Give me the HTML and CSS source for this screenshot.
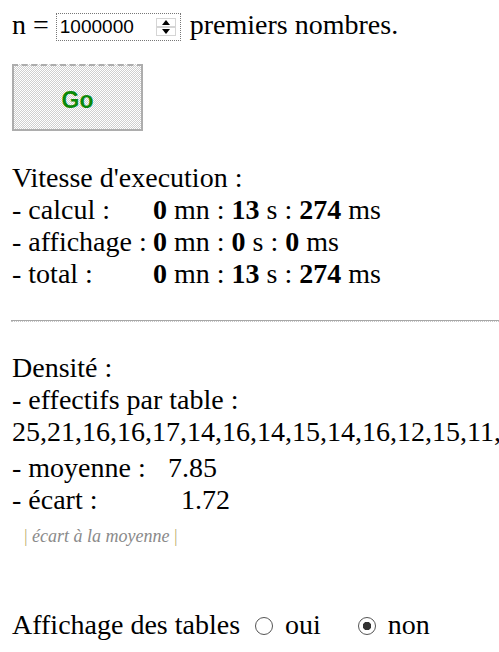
FILE: index.html
```html
<!DOCTYPE html>
<html>
<head>
    <title>Nombres premiers</title>
    <link rel="stylesheet" href="styles.css">
</head>
<body>
    <div class="ligne">
        n =
        <span class="numbox">
            <input type="text" id="n" value="1000000">
            <span class="spin">
                <svg width="20" height="18" viewBox="0 0 20 18">
                    <rect x="0.5" y="0.5" width="19" height="8" fill="none" stroke="#aaa" stroke-dasharray="1 1"/>
                    <rect x="0.5" y="9.5" width="19" height="8" fill="none" stroke="#aaa" stroke-dasharray="1 1"/>
                    <path d="M10 2 L14 7 L6 7 Z" fill="#000"/>
                    <path d="M10 16 L14 11 L6 11 Z" fill="#000"/>
                </svg>
            </span>
        </span>
        premiers nombres.
    </div>

    <button class="go">Go</button>

    <div class="bloc">
        <div>Vitesse d'execution :</div>
        <table class="temps">
            <tr><td class="lib">- calcul :</td><td><b>0</b> mn : <b>13</b> s : <b>274</b> ms</td></tr>
            <tr><td class="lib">- affichage :</td><td><b>0</b> mn : <b>0</b> s : <b>0</b> ms</td></tr>
            <tr><td class="lib">- total :</td><td><b>0</b> mn : <b>13</b> s : <b>274</b> ms</td></tr>
        </table>
    </div>

    <hr class="sep">

    <div class="bloc densite">
        <div>Densité :</div>
        <div>- effectifs par table :</div>
        <div class="liste">25,21,16,16,17,14,16,14,15,14,16,12,15,11,</div>
        <div class="stat"><span class="lib-moy">- moyenne :</span>7.85</div>
        <div class="stat"><span class="lib-ecart">- écart :</span>1.72</div>
        <div class="note"><span class="pipe">|</span> écart à la moyenne <span class="pipe">|</span></div>
    </div>

    <div class="choix">
        Affichage des tables
        <label><input type="radio" name="aff" value="oui"> oui</label>
        <label class="non"><input type="radio" name="aff" value="non" checked> non</label>
    </div>
</body>
</html>
```

FILE: styles.css
```css
body {
    margin: 0;
    padding: 0 0 0 12px;
    font-family: "Liberation Serif", "Times New Roman", serif;
    font-size: 28px;
    line-height: 32px;
    color: #000;
    background: #fff;
    overflow: hidden;
}

.ligne {
    margin-top: 9px;
    white-space: nowrap;
}

.numbox {
    display: inline-flex;
    align-items: center;
    vertical-align: 1px;
    width: 123px;
    height: 26px;
    border: 1px dotted #777;
    margin: 0 2px 0 0;
}

.numbox input {
    border: none;
    outline: none;
    width: 96px;
    padding: 0 0 0 3px;
    font-family: "Liberation Sans", Arial, sans-serif;
    font-size: 19px;
    color: #000;
    background: transparent;
}

.spin {
    display: flex;
}

.go {
    display: block;
    margin-top: 23px;
    width: 131px;
    height: 67px;
    border: 2px solid #adadad;
    border-top-style: dashed;
    background: repeating-conic-gradient(#cfcfcf 0 25%, #fff 0 50%) 0 0 / 2px 2px;
    font-family: "Liberation Sans", Arial, sans-serif;
    font-weight: bold;
    font-size: 23px;
    color: #0a8a0a;
    padding: 6px 0 0;
}

.bloc {
    margin-top: 31px;
}

.temps {
    border-collapse: collapse;
}

.temps td {
    padding: 0;
    white-space: nowrap;
}

.temps .lib {
    width: 141px;
}

.sep {
    margin: 30px 0 0 -1px;
    border: none;
    border-top: 1px solid #a8a8a8;
    border-bottom: 1px dotted #c8c8c8;
    height: 0;
}

.densite {
    margin-top: 30px;
}

.liste {
    white-space: nowrap;
}

.stat {
    margin-top: 4px;
    white-space: nowrap;
}

.stat + .stat {
    margin-top: 0;
}

.lib-moy {
    display: inline-block;
    width: 156px;
}

.lib-ecart {
    display: inline-block;
    width: 169px;
}

.note {
    margin: 4px 0 0 12px;
    font-size: 18px;
    font-style: italic;
    color: #8a8a8a;
}

.note .pipe {
    font-style: normal;
    color: #c0b070;
}

.choix {
    margin-top: 57px;
}

.choix label {
    margin-left: 8px;
}

.choix label.non {
    margin-left: 30px;
}

.choix input {
    appearance: none;
    width: 18px;
    height: 18px;
    margin: 0 5px 0 0;
    border: 1px solid #555;
    border-radius: 50%;
    vertical-align: -1px;
    background: #fff;
}

.choix input:checked {
    background: radial-gradient(circle, #333 0 4px, #fff 4.5px);
}
```
